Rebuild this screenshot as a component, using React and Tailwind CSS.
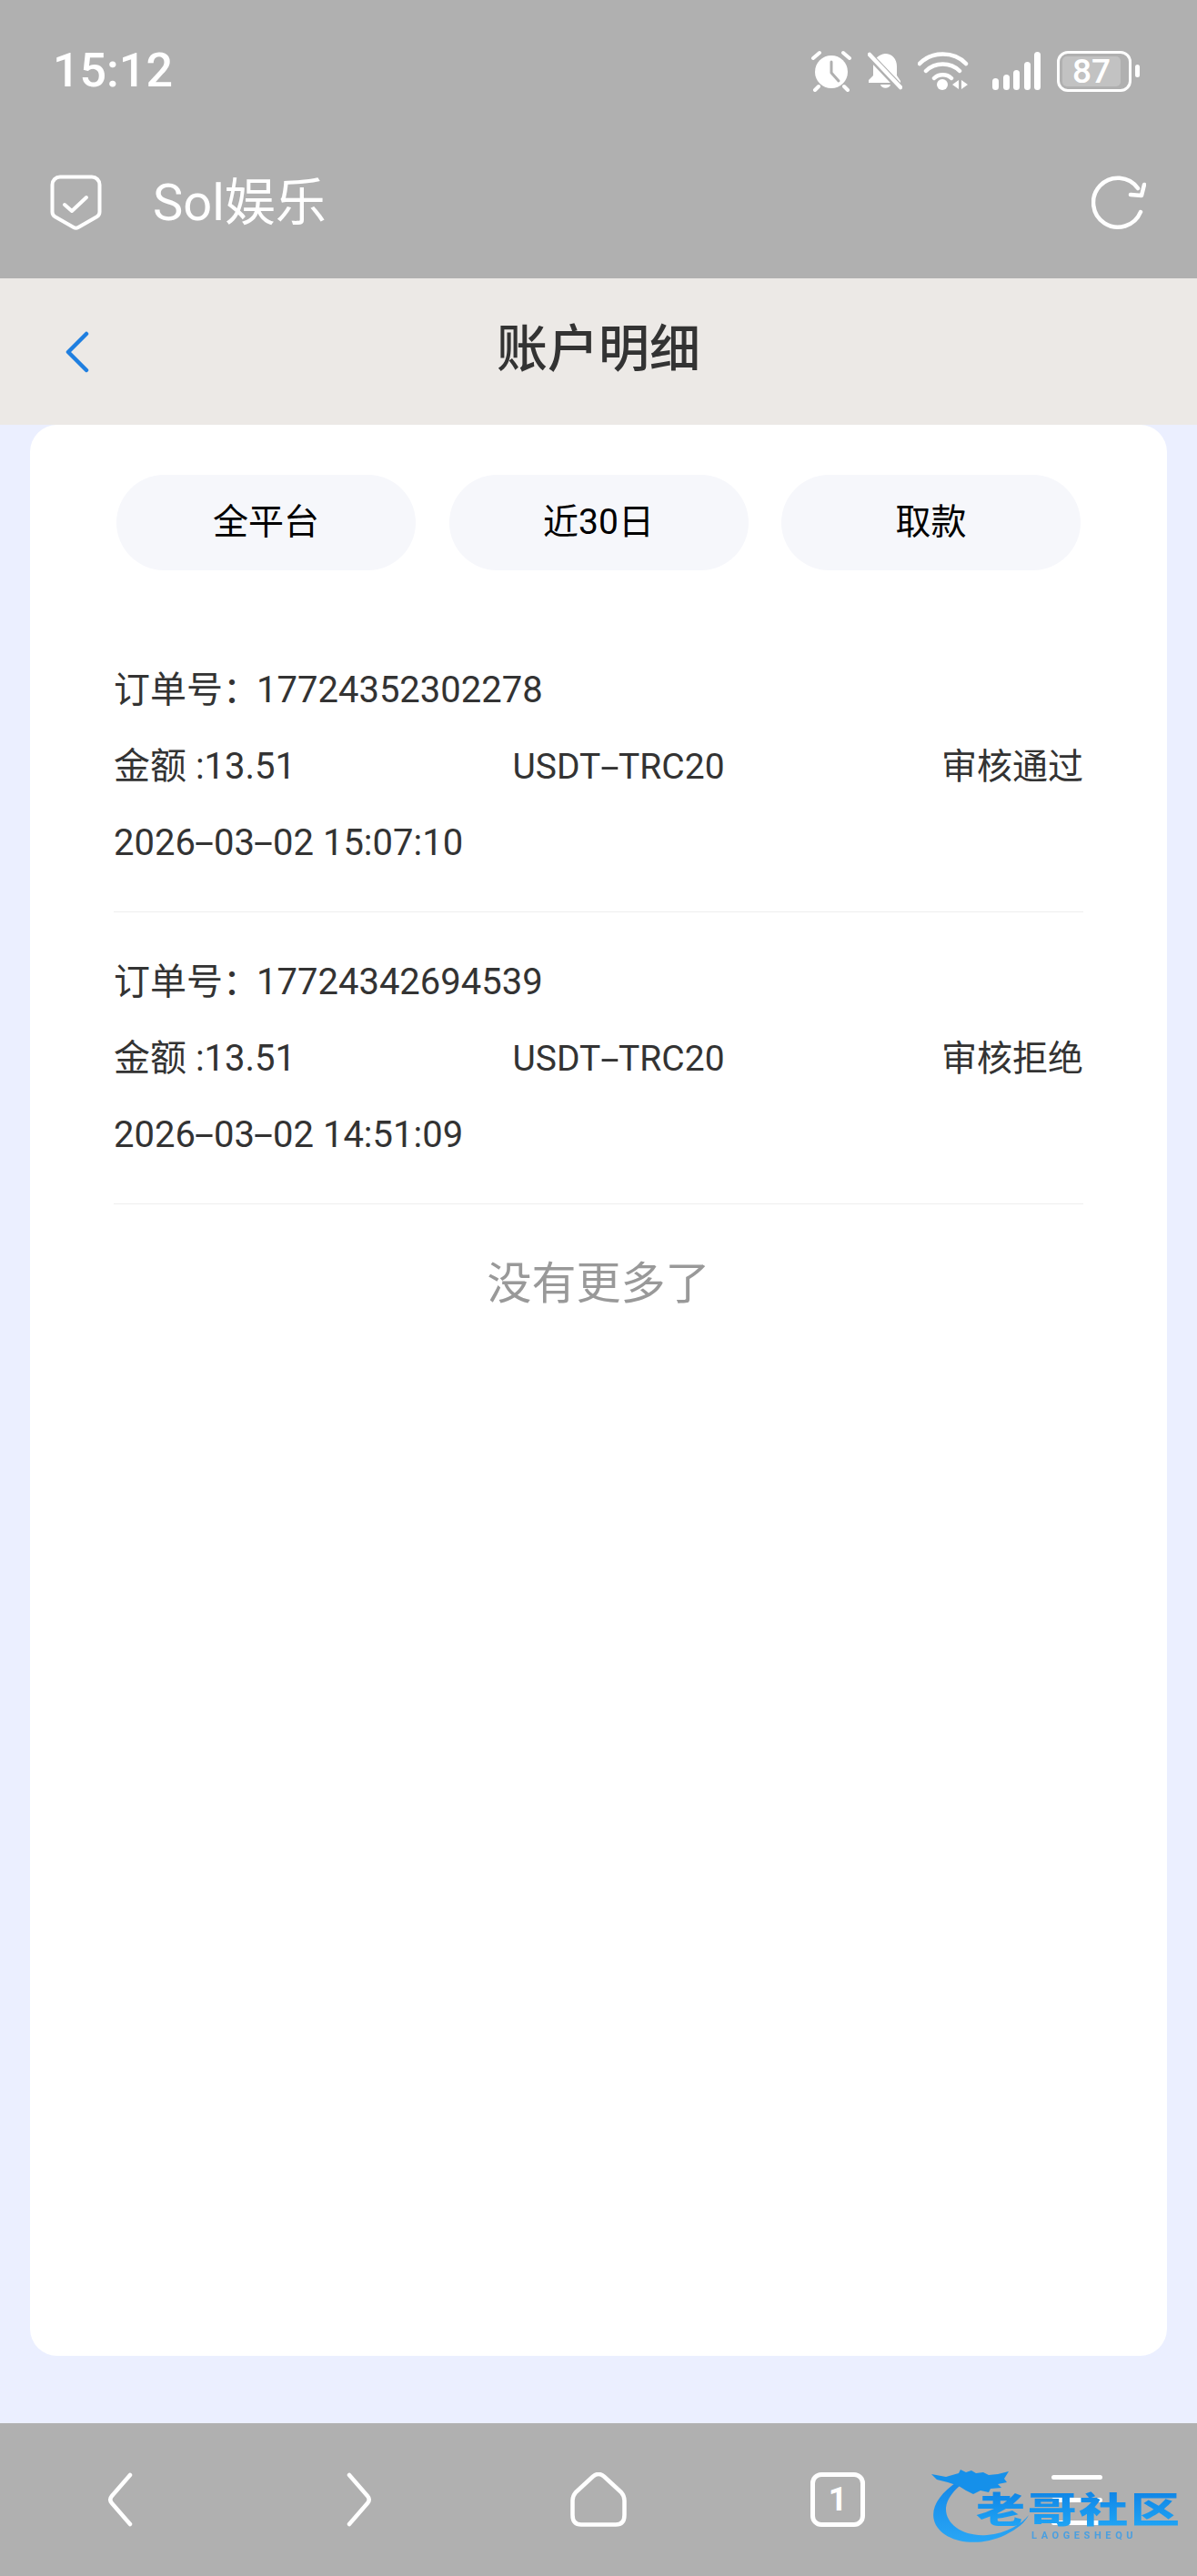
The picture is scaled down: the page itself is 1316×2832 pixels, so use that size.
const font = { fontFamily: 'Roboto, "Noto Sans CJK SC", sans-serif' };

const orders = [
  { no: "17724352302278", status: "审核通过", time: "2026-03-02 15:07:10" },
  { no: "17724342694539", status: "审核拒绝", time: "2026-03-02 14:51:09" },
];

// the hyphens in the screenshot's font are much wider than Roboto's
const Dashed = ({ text }) =>
  text.split("-").map((part, i) => (
    <span key={i}>
      {i > 0 && <span className="mx-[4.500px] inline-block scale-x-[1.9]">-</span>}
      {part}
    </span>
  ));

const StatusIcons = () => (
  <div className="flex items-center">
    {/* alarm */}
    <svg width="46" height="46" viewBox="0 0 46 46" fill="none" className="mr-[17px]">
      <circle cx="23" cy="24" r="18" fill="#fff" />
      <path d="M23 13v12l8 9" stroke="#b0b0b0" strokeWidth="3" strokeLinecap="round" strokeLinejoin="round" />
      <path d="M3 9l7-6M43 9l-7-6M9 40l-4 4M37 40l4 4" stroke="#fff" strokeWidth="4" strokeLinecap="round" />
    </svg>
    {/* muted bell */}
    <svg width="38" height="44" viewBox="0 0 38 44" fill="none" className="mr-[17px]">
      <path d="M6 17c0-8 6-13 13-14 8 0 13 6 13 14v10l4 6v2H1v-3l5-5z" fill="#fff" />
      <path d="M14 37h11c-1 5-10 5-11 0z" fill="#fff" />
      <path d="M0 3l36 38" stroke="#b0b0b0" strokeWidth="8" />
      <path d="M2 4l34 36" stroke="#fff" strokeWidth="4.500" strokeLinecap="round" />
    </svg>
    {/* wifi */}
    <svg width="56" height="44" viewBox="0 0 56 44" fill="none" className="mr-[26px]">
      <path d="M2 14C15 0 40 0 53 14M9 22c10-10 27-10 37 0M18 30c5-5 14-5 19 0" stroke="#fff" strokeWidth="4.500" strokeLinecap="round" />
      <circle cx="27" cy="37" r="6" fill="#fff" />
      <path d="M45 32v10l-7-5zM48 32v10l7-5z" fill="#fff" />
    </svg>
    {/* signal */}
    <div className="mr-[18px] flex h-[42px] items-end gap-[4.500px]">
      <div className="h-[13px] w-[7px] rounded-full bg-white" />
      <div className="h-[17px] w-[7px] rounded-full bg-white" />
      <div className="h-[22px] w-[7px] rounded-full bg-white" />
      <div className="h-[31px] w-[7px] rounded-full bg-white" />
      <div className="h-[42px] w-[7px] rounded-full bg-white" />
    </div>
    {/* battery */}
    <div className="flex items-center gap-[4px]">
      <div className="flex h-[45px] w-[82px] items-center rounded-[12px] border-[3px] border-white p-[3px]">
        <div className="flex h-full w-[64px] items-center justify-center rounded-[5px] bg-[#c2c2c2] text-[37px] leading-none font-medium text-white">
          87
        </div>
      </div>
      <div className="h-[14px] w-[5px] rounded-full bg-white" />
    </div>
  </div>
);

const BottomIcon = ({ children }) => <div className="flex items-start justify-center">{children}</div>;

const Logo = () => (
  <div className="absolute top-[2713px] left-[1023px] h-[90px] w-[276px] blur-[0.6px]">
    <svg width="120" height="90" viewBox="0 0 120 90" fill="none" className="absolute top-0 left-0">
      <defs>
        <linearGradient id="dragon" x1="0" y1="0" x2="0" y2="1">
          <stop offset="0" stopColor="#1488e8" />
          <stop offset="1" stopColor="#29a6f5" />
        </linearGradient>
      </defs>
      <path
        d="M30 15C10 28 0 44 4 58c6 22 44 32 78 16 14-7 22-14 26-22-8 10-24 20-46 22C36 76 16 62 17 44c1-10 9-20 19-27z"
        fill="url(#dragon)"
      />
      <path
        d="M1 7l16 3 14-4 2-4 6 3 6-2 5 3 8-1 6 3 10-1 12-3-5 8 3 4-10 2 4 4-12 1-2 4-9-2-8 4-8-4-8-5-12-4-12-3z"
        fill="#1590ea"
      />
    </svg>
    <div className="absolute top-[25px] left-[50px] flex w-[224px] origin-top scale-y-[.72] justify-between bg-linear-to-b from-[#0f84e6] to-[#22a8f6] bg-clip-text text-[54px] leading-[62px] font-black text-transparent">
      <span>老</span>
      <span>哥</span>
      <span>社</span>
      <span>区</span>
    </div>
    <div className="absolute top-[68px] left-[111px] text-[11px] leading-[13px] font-bold tracking-[4.600px] text-[#4a9fe0]">
      LAOGESHEQU
    </div>
  </div>
);

export default function App() {
  return (
    <div className="relative flex h-[2832px] w-[1316px] flex-col overflow-hidden bg-[#ebefff]" style={font}>
      <div className="bg-[#b0b0b0] text-white">
        <div className="flex h-[156px] items-center justify-between pr-[63px] pl-[58px]">
          <span className="text-[52px] leading-none font-medium">15:12</span>
          <StatusIcons />
        </div>
        <div className="mt-[3px] flex h-[128px] items-center justify-between pr-[56px] pl-[55px]">
          <div className="flex items-center gap-[56px]">
            <svg width="57" height="62" viewBox="0 0 57 62" fill="none">
              <path
                d="M11 2.500h35a8.500 8.500 0 0 1 8.500 8.500v30a6 6 0 0 1-3 5.200L31 58a5 5 0 0 1-5 0L5.500 46.200a6 6 0 0 1-3-5.200V11A8.500 8.500 0 0 1 11 2.500z"
                stroke="#fff"
                strokeWidth="4"
              />
              <path d="M16 33l8 7 16-15" stroke="#fff" strokeWidth="4" strokeLinecap="round" strokeLinejoin="round" />
            </svg>
            <span className="text-[56px] leading-none">Sol娱乐</span>
          </div>
          <svg width="60" height="62" viewBox="0 0 60 62" fill="none">
            <path d="M54 41A27 27 0 1 1 51 15" stroke="#fff" strokeWidth="4.500" strokeLinecap="round" />
            <path d="M58 11l-3 12-12-1" stroke="#fff" strokeWidth="4.500" strokeLinecap="round" strokeLinejoin="round" />
          </svg>
        </div>
        <div className="h-[19px]" />
      </div>

      <div className="relative flex h-[161px] items-center justify-center bg-[#ece9e6] pb-[6px]">
        <svg width="30" height="46" viewBox="0 0 30 46" fill="none" className="absolute top-[58px] left-[70px]">
          <path d="M25 3L5 23l20 20" stroke="#1f7fe0" strokeWidth="4.500" strokeLinecap="round" strokeLinejoin="round" />
        </svg>
        <span className="text-[56px] leading-none font-medium text-[#333]">账户明细</span>
      </div>

      <div className="mx-[33px] flex h-[2123px] flex-col rounded-[30px] bg-white px-[92px] pt-[55px]">
        <div className="mx-[3px] grid grid-cols-3 gap-[36.500px]">
          {["全平台", "近30日", "取款"].map((label) => (
            <div
              key={label}
              className="flex h-[105px] items-center justify-center rounded-full bg-[#f6f7fb] text-[39px] text-black"
            >
              {label}
            </div>
          ))}
        </div>

        <div className="mt-[88px] text-[40px] leading-[84px] text-[#333]">
          {orders.map((order) => (
            <div key={order.no} className="mb-[33px] border-b border-[#eeeeee] pt-[2px] pb-[33px]">
              <div className="flex">
                <span>{"订单号\uFF1A"}</span>
                <span className="-ml-[3px]">{order.no}</span>
              </div>
              <div className="flex justify-between">
                <span>金额 :13.51</span>
                <span className="text-[39px]">
                  <Dashed text="USDT-TRC20" />
                </span>
                <span className="text-[39px]">{order.status}</span>
              </div>
              <div>
                <Dashed text={order.time} />
              </div>
            </div>
          ))}
        </div>
        <div className="mt-[15px] text-center text-[49px] leading-[80px] text-[#999]">没有更多了</div>
      </div>

      <div className="absolute right-0 bottom-0 left-0 grid h-[168px] grid-cols-5 bg-[#b0b0b0] pt-[54px]">
        <BottomIcon>
          <svg width="32" height="60" viewBox="0 0 32 60" fill="none">
            <path d="M27 3L7 26Q3.500 30 7 34L27 57" stroke="#fff" strokeWidth="4.500" strokeLinecap="round" />
          </svg>
        </BottomIcon>
        <BottomIcon>
          <svg width="32" height="60" viewBox="0 0 32 60" fill="none">
            <path d="M5 3L25 26Q28.500 30 25 34L5 57" stroke="#fff" strokeWidth="4.500" strokeLinecap="round" />
          </svg>
        </BottomIcon>
        <BottomIcon>
          <svg width="62" height="60" viewBox="0 0 62 60" fill="none">
            <path
              d="M25 4.500L6 22Q2.500 26 2.500 31V47Q2.500 57.500 12 57.500H50Q59.500 57.500 59.500 47V31Q59.500 26 56 22L37 4.500Q31-0.500 25 4.500z"
              stroke="#fff"
              strokeWidth="4.500"
              strokeLinejoin="round"
            />
          </svg>
        </BottomIcon>
        <BottomIcon>
          <div className="flex h-[60px] w-[60px] items-center justify-center rounded-[12px] border-[5px] border-white text-[36px] leading-none font-bold text-white">
            1
          </div>
        </BottomIcon>
        <BottomIcon>
          <div className="flex h-[58px] w-[56px] flex-col justify-between pt-[3px]">
            <div className="h-[5px] rounded-full bg-white" />
            <div className="h-[5px] rounded-full bg-white" />
            <div className="h-[5px] rounded-full bg-white" />
          </div>
        </BottomIcon>
      </div>
      <Logo />
    </div>
  );
}
